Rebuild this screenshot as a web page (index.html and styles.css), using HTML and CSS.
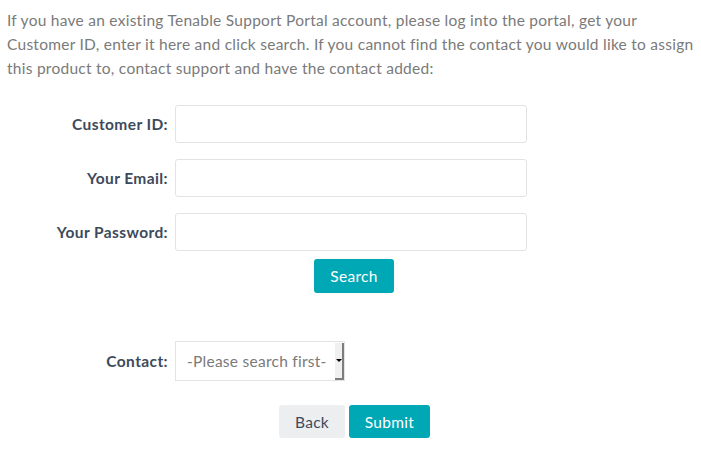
FILE: index.html
```html
<!DOCTYPE html>
<html>
<head>
<meta charset="utf-8">
<link rel="stylesheet" href="styles.css">
</head>
<body>
<div class="page">
  <p class="intro">If you have an existing Tenable Support Portal account, please log into the portal, get your Customer ID, enter it here and click search. If you cannot find the contact you would like to assign this product to, contact support and have the contact added:</p>
  <form class="form">
    <div class="row">
      <label class="label">Customer ID:</label>
      <input class="input" type="text">
    </div>
    <div class="row">
      <label class="label">Your Email:</label>
      <input class="input" type="text">
    </div>
    <div class="row">
      <label class="label">Your Password:</label>
      <input class="input" type="password">
    </div>
    <div class="row search-row">
      <span></span>
      <div><button type="button" class="btn btn-primary btn-search">Search</button></div>
    </div>
    <div class="row contact-row">
      <label class="label">Contact:</label>
      <div class="select">
        <span class="select-text">-Please search first-</span>
        <span class="select-arrow"><span class="tri"></span></span>
      </div>
    </div>
    <div class="actions">
      <button type="button" class="btn btn-default">Back</button>
      <button type="button" class="btn btn-primary btn-submit">Submit</button>
    </div>
  </form>
</div>
</body>
</html>
```

FILE: styles.css
```css
html, body {
  margin: 0;
  padding: 0;
  background: #ffffff;
}
body {
  font-family: "Lato", "Liberation Sans", sans-serif;
  font-size: 15.5px;
  letter-spacing: 0.26px;
  color: #777777;
}
.page {
  padding: 8px 0 0 7px;
}
.intro {
  margin: 0;
  line-height: 24px;
  width: 692px;
  color: #7a7a7a;
}
.form {
  margin-top: 25px;
  margin-left: -7px;
}
.row {
  display: grid;
  grid-template-columns: 167px 352px;
  column-gap: 8px;
  align-items: center;
  margin-bottom: 16px;
}
.label {
  text-align: right;
  font-weight: bold;
  letter-spacing: 0.4px;
  color: #3d4a5c;
  margin-right: -1px;
}
.input {
  box-sizing: border-box;
  height: 38px;
  width: 352px;
  border: 1px solid #e3e3e3;
  border-radius: 3px;
  margin: 0;
  padding: 0 10px;
  font: inherit;
  background: #fff;
}
.search-row {
  margin-top: -8px;
  margin-bottom: 48px;
}
.btn {
  box-sizing: border-box;
  border: none;
  border-radius: 3px;
  font-family: inherit;
  font-size: 15.5px;
  letter-spacing: 0.3px;
  height: 33px;
  padding: 0;
  margin: 0;
  cursor: pointer;
}
.btn-primary {
  background: #00a7b5;
  color: #ffffff;
}
.btn-default {
  background: #eceef0;
  color: #3d4a5c;
}
.btn-search {
  width: 80px;
  height: 34px;
  margin-left: 139px;
}
.contact-row {
  margin-bottom: 24px;
}
.select {
  box-sizing: border-box;
  width: 170px;
  height: 40px;
  border: 1px solid #e3e3e3;
  display: flex;
  align-items: center;
  justify-content: space-between;
  background: #fff;
}
.select-text {
  padding-left: 11px;
  color: #7a7a7a;
}
.select-arrow {
  box-sizing: border-box;
  align-self: stretch;
  width: 9px;
  margin: 1px 0 0 0;
  background: #f0f0f0;
  border-right: 2px solid #7d7d7d;
  border-bottom: 2px solid #7d7d7d;
  display: flex;
  align-items: center;
  justify-content: center;
}
.tri {
  width: 0;
  height: 0;
  border-left: 3px solid transparent;
  border-right: 3px solid transparent;
  border-top: 3px solid #000;
}
.actions {
  display: flex;
  gap: 4px;
  padding-left: 279px;
}
.actions .btn-default {
  width: 66px;
}
.btn-submit {
  width: 81px;
}
```
